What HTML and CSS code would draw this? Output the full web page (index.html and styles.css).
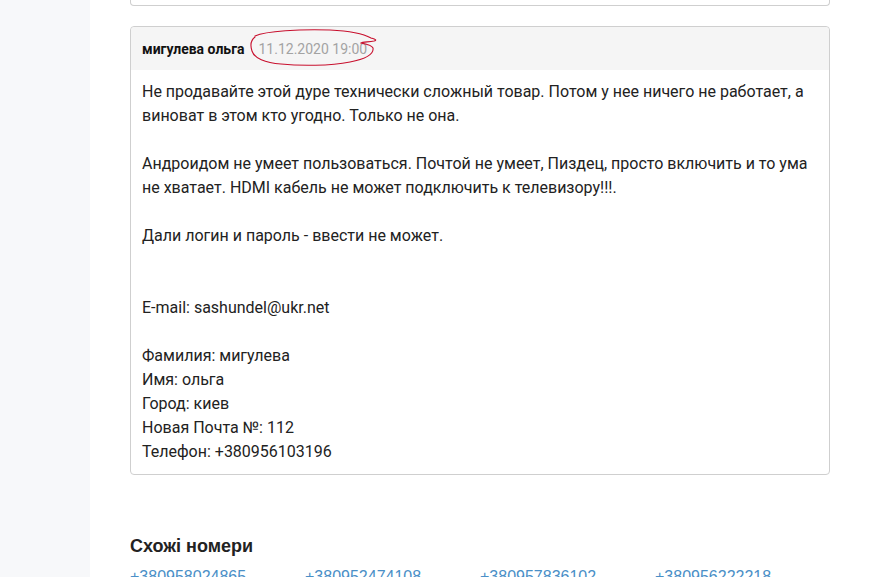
FILE: index.html
```html
<!DOCTYPE html>
<html lang="ru">
<head>
<meta charset="utf-8">
<title>Отзыв</title>
<link rel="stylesheet" href="styles.css">
</head>
<body>
<div class="layout">
  <aside class="sidebar"></aside>
  <main class="main">
    <div class="card card-prev"></div>
    <div class="card">
      <div class="card-head">
        <span class="author">мигулева ольга</span>
        <span class="date">11.12.2020 19:00</span>
        <svg class="circle" width="136" height="40" viewBox="0 0 136 40" aria-hidden="true">
          <path d="M7 8 C 18 3, 52 1, 82 2 C 102 3, 114 5, 123 10 C 126 11, 130 12, 126 13 C 120 14, 114 14, 113 15 C 118 16, 124 17, 125 20 C 126 26, 118 31, 102 34 C 82 38, 52 38, 33 36 C 17 35, 6 30, 4 23 C 2 17, 3 12, 7 9" fill="none" stroke="#c8102e" stroke-width="1.1" stroke-linecap="round"/>
        </svg>
      </div>
      <div class="card-body">
        Не продавайте этой дуре технически сложный товар. Потом у нее ничего не работает, а виноват в этом кто угодно. Только не она.<br><br>
        Андроидом не умеет пользоваться. Почтой не умеет, Пиздец, просто включить и то ума не хватает. HDMI кабель не может подключить к телевизору!!!.<br><br>
        Дали логин и пароль - ввести не может.<br><br><br>
        E-mail: sashundel@ukr.net<br><br>
        Фамилия: мигулева<br>
        Имя: ольга<br>
        Город: киев<br>
        Новая Почта №: 112<br>
        Телефон: +380956103196
      </div>
    </div>
    <h2 class="similar-title">Схожі номери</h2>
    <div class="similar-list">
      <a href="#">+380958024865</a>
      <a href="#">+380952474108</a>
      <a href="#">+380957836102</a>
      <a href="#">+380956222218</a>
    </div>
  </main>
</div>
</body>
</html>
```
FILE: styles.css
```css
html, body {
  margin: 0;
  padding: 0;
  background: #fff;
  height: 100%;
  overflow: hidden;
}
.layout {
  display: flex;
  min-height: 577px;
}
.sidebar {
  width: 90px;
  flex: none;
  background: #f7f8fa;
}
.main {
  padding-left: 40px;
  width: 700px;
}
.card {
  border: 1px solid #cfcfcf;
  border-radius: 4px;
  background: #fff;
  font-family: Roboto, "Liberation Sans", sans-serif;
}
.card-prev {
  height: 5px;
  border-top: none;
  border-radius: 0 0 4px 4px;
  margin-bottom: 20px;
}
.card-head {
  position: relative;
  background: #f5f5f5;
  height: 43px;
  display: flex;
  align-items: center;
  padding: 0 11px;
  border-radius: 4px 4px 0 0;
}
.author {
  font-weight: bold;
  font-size: 14px;
  color: #111;
  margin-right: 14px;
}
.date {
  font-size: 14px;
  color: #a3a3a3;
}
.circle {
  position: absolute;
  left: 117px;
  top: 1px;
}
.card-body {
  padding: 10px 11px 10px;
  font-size: 16px;
  line-height: 24px;
  color: #222;
}
.similar-title {
  font-family: "Liberation Sans", Arial, sans-serif;
  font-size: 18px;
  font-weight: bold;
  color: #222;
  margin: 61px 0 11px;
  line-height: 20px;
}
.similar-list {
  display: grid;
  grid-template-columns: repeat(4, 175px);
  font-family: "Liberation Sans", Arial, sans-serif;
  font-size: 16px;
  line-height: 20px;
}
.similar-list a {
  color: #4a8fc7;
  text-decoration: none;
}
```
